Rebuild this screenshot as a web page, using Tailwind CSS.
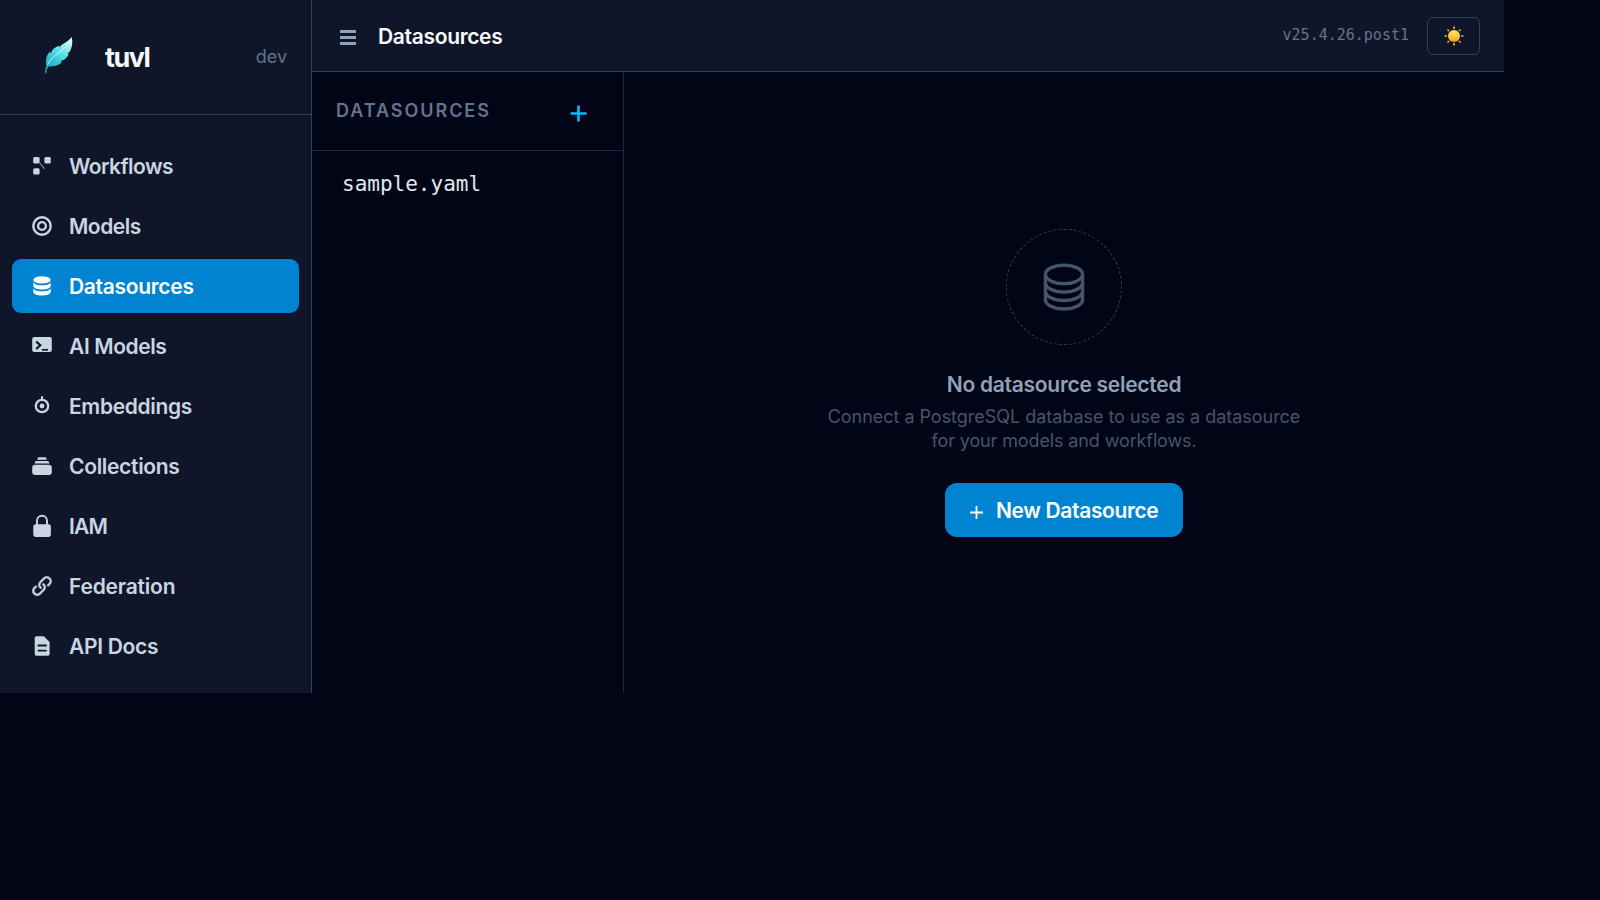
<!DOCTYPE html>
<html lang="en">
    <head>
        <title>tuvl - Datasources</title>
        <meta charset="UTF-8" />
        <meta name="viewport" content="width=device-width, initial-scale=1.0" />
        <script src="https://cdn.jsdelivr.net/npm/@tailwindcss/browser@4"></script>
    </head>
    <body class="bg-[#020516] font-['Inter',sans-serif] text-slate-300 overflow-hidden">
        <div class="flex w-[1504px] h-[693px]">
            <!-- Sidebar -->
            <aside class="w-[312px] shrink-0 flex flex-col bg-[#0f1629] border-r border-slate-700">
                <div class="h-[115px] shrink-0 flex items-center pl-10 pr-6 border-b border-slate-700">
                    <svg class="w-9 h-10 shrink-0" viewBox="0 0 36 40" fill="none">
                        <defs>
                            <linearGradient id="feather" x1="30" y1="2" x2="6" y2="34" gradientUnits="userSpaceOnUse">
                                <stop offset="0" stop-color="#d8fffb" />
                                <stop offset="0.45" stop-color="#4fdcea" />
                                <stop offset="1" stop-color="#1397b8" />
                            </linearGradient>
                        </defs>
                        <path fill="url(#feather)" d="M31.800 0C33 6 32 11 29.500 15L27.500 16L28.800 17C26.500 21.500 24 23.500 20.500 24L22 25C19 28.500 13 30 8.500 29.500C7 31.500 6.500 33.500 6.200 36.500L4.800 36C5 33 5.500 31 6.500 28.500C5 23 6.500 18 10 14.500L10.600 16.500C12 12.500 15 10 19 8.800L19 10.500C22 6.500 28 5 31.800 0Z" />
                        <path stroke="#dffcff" stroke-width="0.9" d="M7.500 28C11 20 19 17 27 8" />
                    </svg>
                    <span class="ml-[29px] pt-0.5 text-[27px] font-bold tracking-[-1.5px] text-slate-50">tuvl</span>
                    <span class="ml-auto text-lg text-slate-500">dev</span>
                </div>
                <nav class="flex flex-col gap-1.5 px-3 pt-6 text-[21px] font-[580] tracking-[-0.31px]">
                    <a href="#" class="h-[54px] flex items-center gap-[15px] px-[18px] rounded-[9px]">
                        <svg class="size-6" viewBox="0 0 24 24" fill="currentColor">
                            <rect x="3.200" y="3" width="6.400" height="6.400" rx="1.500" />
                            <rect x="14.400" y="3" width="6.400" height="6.400" rx="1.500" />
                            <rect x="3.200" y="14.200" width="6.400" height="6.400" rx="1.500" />
                            <path fill="none" stroke="currentColor" stroke-width="0.9" d="M9.600 8.800L14.600 14.800" />
                        </svg>
                        <span class="pt-0.5 tracking-[-0.57px]">Workflows</span>
                    </a>
                    <a href="#" class="h-[54px] flex items-center gap-[15px] px-[18px] rounded-[9px]">
                        <svg class="size-6" viewBox="0 0 24 24" fill="none" stroke="currentColor" stroke-width="2.400">
                            <circle cx="12" cy="12" r="8.700" />
                            <circle cx="12" cy="12" r="3.900" />
                        </svg>
                        <span class="pt-0.5 tracking-[-0.5px]">Models</span>
                    </a>
                    <a href="#" class="h-[54px] flex items-center gap-[15px] px-[18px] rounded-[9px] bg-sky-600 text-white">
                        <svg class="size-6" viewBox="0 0 24 24" fill="currentColor">
                            <ellipse cx="12" cy="5.900" rx="8.700" ry="3.700" />
                            <path d="M3.300 8.400C5 10.800 8 11.300 12 11.300S19 10.800 20.700 8.400V11.700C20.700 14 17 15.600 12 15.600S3.300 14 3.300 11.700Z" />
                            <path d="M3.300 14.400C5 16.800 8 17.300 12 17.300S19 16.800 20.700 14.400V17.700C20.700 20 17 21.600 12 21.600S3.300 20 3.300 17.700Z" />
                        </svg>
                        <span class="pt-0.5">Datasources</span>
                    </a>
                    <a href="#" class="h-[54px] flex items-center gap-[15px] px-[18px] rounded-[9px]">
                        <svg class="size-6" viewBox="0 0 24 24" fill="none">
                            <rect x="2.200" y="3.100" width="19.600" height="15" rx="2" fill="currentColor" />
                            <path stroke="#0f1629" stroke-width="2.200" d="M6.200 7.600L10.300 11.300L6.200 15" />
                            <path stroke="#0f1629" stroke-width="1.700" d="M12 15.800H18" />
                        </svg>
                        <span class="pt-0.5 tracking-[-0.4px]">AI Models</span>
                    </a>
                    <a href="#" class="h-[54px] flex items-center gap-[15px] px-[18px] rounded-[9px]">
                        <svg class="size-6" viewBox="0 0 24 24" fill="none" stroke="currentColor" stroke-width="2.300">
                            <circle cx="12" cy="12" r="6.200" />
                            <circle cx="12" cy="12" r="2.400" fill="currentColor" stroke="none" />
                            <path d="M12 3V6" stroke-linecap="round" stroke-width="2.100" />
                        </svg>
                        <span class="pt-0.5 tracking-[-0.35px]">Embeddings</span>
                    </a>
                    <a href="#" class="h-[54px] flex items-center gap-[15px] px-[18px] rounded-[9px]">
                        <svg class="size-6" viewBox="0 0 24 24" fill="currentColor">
                            <path d="M8.600 3.300H15.400Q16.600 3.600 16.800 5.700H7.200Q7.400 3.600 8.600 3.300Z" />
                            <path d="M6 6.900H18Q19.200 7.200 19.400 9.600H4.600Q4.800 7.200 6 6.900Z" />
                            <rect x="2.200" y="10.700" width="19.600" height="10.300" rx="3" />
                        </svg>
                        <span class="pt-0.5">Collections</span>
                    </a>
                    <a href="#" class="h-[54px] flex items-center gap-[15px] px-[18px] rounded-[9px]">
                        <svg class="size-6" viewBox="0 0 24 24" fill="none">
                            <rect x="3.300" y="10.300" width="17.600" height="12.600" rx="2.300" fill="currentColor" />
                            <path stroke="currentColor" stroke-width="1.900" d="M7 11V6.800A5 5 0 0 1 17 6.800V11" />
                        </svg>
                        <span class="pt-0.5 tracking-[-0.75px]">IAM</span>
                    </a>
                    <a href="#" class="h-[54px] flex items-center gap-[15px] px-[18px] rounded-[9px]">
                        <svg class="size-6" viewBox="0 0 20 20" fill="currentColor" stroke="currentColor" stroke-width="0.500">
                            <path d="M12.232 4.232a2.500 2.500 0 0 1 3.536 3.536l-1.225 1.224a.75.75 0 0 0 1.061 1.060l1.224-1.224a4 4 0 0 0-5.656-5.656l-3 3a4 4 0 0 0 .225 5.865.75.75 0 0 0 .977-1.138 2.500 2.500 0 0 1-.142-3.667l3-3Z" />
                            <path d="M11.603 7.963a.75.75 0 0 0-.977 1.138 2.500 2.500 0 0 1 .142 3.667l-3 3a2.500 2.500 0 0 1-3.536-3.536l1.225-1.224a.75.75 0 0 0-1.061-1.060l-1.224 1.224a4 4 0 1 0 5.656 5.656l3-3a4 4 0 0 0-.225-5.865Z" />
                        </svg>
                        <span class="pt-0.5 tracking-[-0.2px]">Federation</span>
                    </a>
                    <a href="#" class="h-[54px] flex items-center gap-[15px] px-[18px] rounded-[9px]">
                        <svg class="size-6" viewBox="0 0 24 24" fill="none">
                            <path fill="currentColor" d="M6.700 2.200H13.800L19.600 8V20Q19.600 21.800 17.800 21.800H6.500Q4.700 21.800 4.700 20V4.200Q4.700 2.200 6.700 2.200Z" />
                            <path stroke="#0f1629" stroke-width="1.800" stroke-linecap="round" d="M8.300 11.500H16M8.300 16.600H16" />
                        </svg>
                        <span class="pt-0.5">API Docs</span>
                    </a>
                </nav>
            </aside>

            <div class="flex-1 flex flex-col">
                <!-- Top bar -->
                <header class="h-[72px] shrink-0 flex items-center pl-7 pr-6 bg-[#0f1629] border-b border-slate-700">
                    <button class="flex flex-col gap-[3px] pt-1">
                        <span class="w-4 h-[3px] bg-slate-400"></span>
                        <span class="w-4 h-[3px] bg-slate-400"></span>
                        <span class="w-4 h-[3px] bg-slate-400"></span>
                    </button>
                    <h1 class="ml-[22px] pt-0.5 text-[21px] font-[580] tracking-[-0.33px] text-slate-50">Datasources</h1>
                    <span class="ml-auto text-[15px] font-['DejaVu_Sans_Mono',monospace] text-slate-500">v25.4.26.post1</span>
                    <button class="ml-[18px] w-[53px] h-[38px] flex items-center justify-center border border-slate-700 rounded-md">
                        <svg class="size-5" viewBox="0 0 20 20">
                            <defs>
                                <linearGradient id="sun" x1="0" y1="0" x2="0" y2="1">
                                    <stop offset="0" stop-color="#ffe95c" />
                                    <stop offset="0.6" stop-color="#fcc33c" />
                                    <stop offset="1" stop-color="#f0962a" />
                                </linearGradient>
                            </defs>
                            <path stroke="#f3a935" stroke-width="1.700" d="M10 0.500V3M10 17V19.500M0.500 10H3M17 10H19.500M3.500 3.500L5 5M15 15L16.500 16.500M3.500 16.500L5 15M15 5L16.500 3.500" />
                            <circle cx="10" cy="10" r="6" fill="url(#sun)" />
                        </svg>
                    </button>
                </header>

                <div class="flex-1 flex">
                    <!-- File list -->
                    <section class="w-[312px] shrink-0 border-r border-slate-800">
                        <div class="h-[79px] flex items-center justify-between pl-6 pr-9 border-b border-slate-800">
                            <h2 class="text-lg font-semibold tracking-[1.95px] text-slate-500">DATASOURCES</h2>
                            <svg class="mt-[5px] size-[17px]" viewBox="0 0 17 17" stroke="#00bcff" stroke-width="2.600">
                                <path d="M8.500 0.500V16.500M0.500 8.500H16.500" />
                            </svg>
                        </div>
                        <p class="pl-[30px] pt-[17px] text-[21px] leading-8 font-['DejaVu_Sans_Mono',monospace] text-slate-200">sample.yaml</p>
                    </section>

                    <!-- Empty state -->
                    <main class="flex-1 flex flex-col items-center pt-[157px]">
                        <div class="size-[116px] flex items-center justify-center rounded-full border border-dashed border-slate-700 text-slate-600">
                            <svg class="size-[54px]" viewBox="0 0 24 24" fill="none" stroke="currentColor" stroke-width="1.500" stroke-linecap="round" stroke-linejoin="round">
                                <path d="M20.250 6.375c0 2.278-3.694 4.125-8.250 4.125S3.750 8.653 3.750 6.375m16.500 0c0-2.278-3.694-4.125-8.250-4.125S3.750 4.097 3.750 6.375m16.500 0v11.250c0 2.278-3.694 4.125-8.250 4.125s-8.250-1.847-8.250-4.125V6.375m16.500 3.750c0 2.278-3.694 4.125-8.250 4.125s-8.250-1.847-8.250-4.125m16.500 3.750C20.250 16.153 16.556 18 12 18s-8.250-1.847-8.250-4.125" />
                            </svg>
                        </div>
                        <h3 class="mt-[25px] text-[21px] leading-[30px] font-[580] tracking-[-0.28px] text-slate-400">No datasource selected</h3>
                        <p class="mt-[5px] text-lg leading-6 text-center text-slate-600">
                            <span class="tracking-[-0.03px]">Connect a PostgreSQL database to use as a datasource</span><br />
                            <span class="tracking-[-0.12px]">for your models and workflows.</span>
                        </p>
                        <button class="mt-[30px] w-[238px] h-[54px] flex items-center pl-[25px] rounded-xl bg-sky-600 text-white">
                            <svg class="mt-1 size-[13px]" viewBox="0 0 13 13" stroke="currentColor" stroke-width="1.800">
                                <path d="M6.500 0V13M0 6.500H13" />
                            </svg>
                            <span class="ml-[13px] pt-0.5 text-[21px] font-[640] tracking-[-0.36px]">New Datasource</span>
                        </button>
                    </main>
                </div>
            </div>
        </div>
    </body>
</html>
